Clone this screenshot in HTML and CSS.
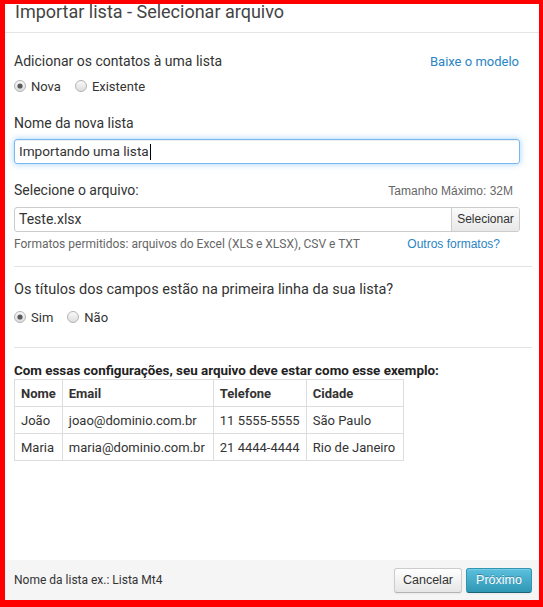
FILE: index.html
```html
<!DOCTYPE html>
<html lang="pt-BR">
<head>
<meta charset="utf-8">
<title>Importar lista</title>
<link rel="stylesheet" href="styles.css">
</head>
<body>
<div class="frame">
  <div class="modal">
    <div class="modal-header">
      <h3 class="title">Importar lista - Selecionar arquivo</h3>
    </div>
    <div class="modal-body">
      <div class="row-between first">
        <span class="label">Adicionar os contatos à uma lista</span>
        <a class="link">Baixe o modelo</a>
      </div>
      <div class="radios r1">
        <span class="radio"><svg width="12" height="12" viewBox="0 0 12 12"><defs><linearGradient id="rg1" x1="0" y1="0" x2="0" y2="1"><stop offset="0" stop-color="#fafafa"/><stop offset="1" stop-color="#dcdcdc"/></linearGradient></defs><circle cx="6" cy="6" r="5.5" fill="url(#rg1)" stroke="#b3b3b3"/><circle cx="6" cy="6" r="2.6" fill="#5a5a5a"/></svg>Nova</span>
        <span class="radio"><svg width="12" height="12" viewBox="0 0 12 12"><circle cx="6" cy="6" r="5.5" fill="url(#rg1)" stroke="#b3b3b3"/></svg>Existente</span>
      </div>

      <div class="label field-label">Nome da nova lista</div>
      <div class="input focus">Importando uma lista<span class="caret"></span></div>

      <div class="row-between field-label2">
        <span class="label">Selecione o arquivo:</span>
        <span class="hint-arial">Tamanho Máximo: 32M</span>
      </div>
      <div class="file-input">
        <span class="file-name">Teste.xlsx</span>
        <span class="file-btn">Selecionar</span>
      </div>
      <div class="row-between formats">
        <span class="help">Formatos permitidos: arquivos do Excel (XLS e XLSX), CSV e TXT</span>
        <a class="link-arial">Outros formatos?</a>
      </div>

      <hr class="divider">

      <div class="label label-wide">Os títulos dos campos estão na primeira linha da sua lista?</div>
      <div class="radios r2">
        <span class="radio"><svg width="12" height="12" viewBox="0 0 12 12"><circle cx="6" cy="6" r="5.5" fill="url(#rg1)" stroke="#b3b3b3"/><circle cx="6" cy="6" r="2.6" fill="#5a5a5a"/></svg>Sim</span>
        <span class="radio"><svg width="12" height="12" viewBox="0 0 12 12"><circle cx="6" cy="6" r="5.5" fill="url(#rg1)" stroke="#b3b3b3"/></svg>Não</span>
      </div>

      <hr class="divider second">

      <div class="example-title">Com essas configurações, seu arquivo deve estar como esse exemplo:</div>
      <table class="example">
        <thead>
          <tr><th class="c1">Nome</th><th class="c2">Email</th><th class="c3">Telefone</th><th class="c4">Cidade</th></tr>
        </thead>
        <tbody>
          <tr><td>João</td><td>joao@dominio.com.br</td><td>11 5555-5555</td><td>São Paulo</td></tr>
          <tr><td>Maria</td><td>maria@dominio.com.br</td><td>21 4444-4444</td><td>Rio de Janeiro</td></tr>
        </tbody>
      </table>
    </div>
    <div class="modal-footer">
      <span class="footer-note">Nome da lista ex.: Lista Mt4</span>
      <div class="buttons">
        <span class="btn btn-default">Cancelar</span>
        <span class="btn btn-info">Próximo</span>
      </div>
    </div>
  </div>
</div>
</body>
</html>
```
FILE: styles.css
```css
* { box-sizing: border-box; }
html, body { margin: 0; padding: 0; background: #fff; }
body {
  font-family: Roboto, "Noto Sans", Arial, sans-serif;
  color: #333;
  font-size: 13px;
}
.frame {
  width: 543px;
  height: 607px;
  border-style: solid;
  border-color: #ff0000;
  border-width: 4px 4px 7px 5px;
  overflow: hidden;
}
.modal {
  height: 100%;
  display: flex;
  flex-direction: column;
  background: #fff;
}
.modal-header {
  height: 29px;
  border-bottom: 1px solid #e5e5e5;
  padding: 0 0 0 10px;
  flex: none;
}
.title {
  margin: -1px 0 0 0;
  font-weight: 400;
  font-size: 18px;
  line-height: 18px;
  color: #444;
}
.modal-body {
  flex: 1;
  padding: 0 19px 0 9px;
}
.row-between {
  display: flex;
  justify-content: space-between;
  align-items: baseline;
}
.first { margin-top: 18px; height: 20px; }
.label { font-size: 14px; line-height: 20px; color: #333; }
.label-wide { font-size: 14.5px; }
.link { color: #2a84c6; font-size: 13px; margin-right: 1px; }
.radios {
  display: flex;
  gap: 14px;
  height: 20px;
  align-items: center;
  font-size: 13px;
}
.r1 { margin-top: 5px; }
.r2 { margin-top: 7px; }
.radio { display: inline-flex; align-items: center; gap: 5px; }
.radio svg { display: block; }
.field-label { margin-top: 17px; }
.input {
  margin-top: 6px;
  height: 25px;
  border: 1px solid #ccc;
  border-radius: 3px;
  padding: 0 4px;
  font-size: 13.6px;
  line-height: 23px;
  color: #333;
  display: flex;
  align-items: center;
}
.input.focus {
  border-color: rgba(82, 168, 236, 0.8);
  box-shadow: inset 0 1px 1px rgba(0,0,0,0.075), 0 0 6px rgba(82, 168, 236, 0.55);
}
.caret { display: inline-block; width: 1px; height: 16px; background: #000; margin-left: 1px; }
.field-label2 { margin-top: 16px; height: 20px; }
.hint-arial {
  font-family: "Liberation Sans", Arial, sans-serif;
  font-size: 12px;
  color: #666;
  margin-right: 7px;
}
.file-input {
  margin-top: 7px;
  height: 25px;
  border: 1px solid #ccc;
  border-radius: 3px;
  display: flex;
  align-items: stretch;
  overflow: hidden;
}
.file-name {
  flex: 1;
  padding-left: 4px;
  font-size: 14px;
  line-height: 23px;
}
.file-btn {
  width: 68px;
  border-left: 1px solid #ccc;
  background: linear-gradient(#fbfbfb, #e8e8e8);
  font-family: "Liberation Sans", Arial, sans-serif;
  font-size: 12px;
  line-height: 23px;
  text-align: center;
  color: #333;
}
.formats { margin-top: 4px; height: 17px; line-height: 17px; }
.help { font-size: 12px; color: #666; }
.link-arial {
  font-family: "Liberation Sans", Arial, sans-serif;
  font-size: 12px;
  color: #2a84c6;
  margin-right: 20px;
}
.divider {
  border: 0;
  border-top: 1px solid #e3e3e3;
  margin: 13px -12px 13px 0;
  height: 0;
}
.divider.second { margin-top: 20px; margin-bottom: 15px; }
.example-title {
  font-weight: 700;
  font-size: 13.4px;
  line-height: 16px;
  color: #222;
}
.example {
  border-collapse: collapse;
  font-size: 13px;
}
.example th, .example td {
  border: 1px solid #ddd;
  height: 27px;
  padding: 0 6px;
  text-align: left;
  white-space: nowrap;
}
.example th { font-weight: 700; color: #333; }
.c1 { width: 47px; }
.c2 { width: 151px; }
.c3 { width: 93px; }
.c4 { width: 97px; }
.modal-footer {
  flex: none;
  height: 40px;
  background: #f5f5f5;
  display: flex;
  align-items: center;
  justify-content: space-between;
  padding: 0 7px 0 9px;
}
.footer-note { font-size: 12px; color: #333; }
.buttons { display: flex; gap: 4px; }
.btn {
  display: inline-block;
  height: 25px;
  line-height: 23px;
  padding: 0;
  text-align: center;
  font-family: "Liberation Sans", Arial, sans-serif;
  font-size: 12.5px;
  color: #333;
  border: 1px solid #ccc;
  border-bottom-color: #b3b3b3;
  border-radius: 3px;
  background: linear-gradient(#ffffff, #e6e6e6);
  box-shadow: inset 0 1px 0 rgba(255,255,255,.2), 0 1px 2px rgba(0,0,0,.05);
}
.btn-default { width: 68px; }
.btn-info {
  width: 66px;
  color: #fff;
  background: linear-gradient(#5bc0de, #2f96b4);
  border-color: #2f96b4 #2f96b4 #1f6377;
  text-shadow: 0 -1px 0 rgba(0,0,0,.25);
}
```
